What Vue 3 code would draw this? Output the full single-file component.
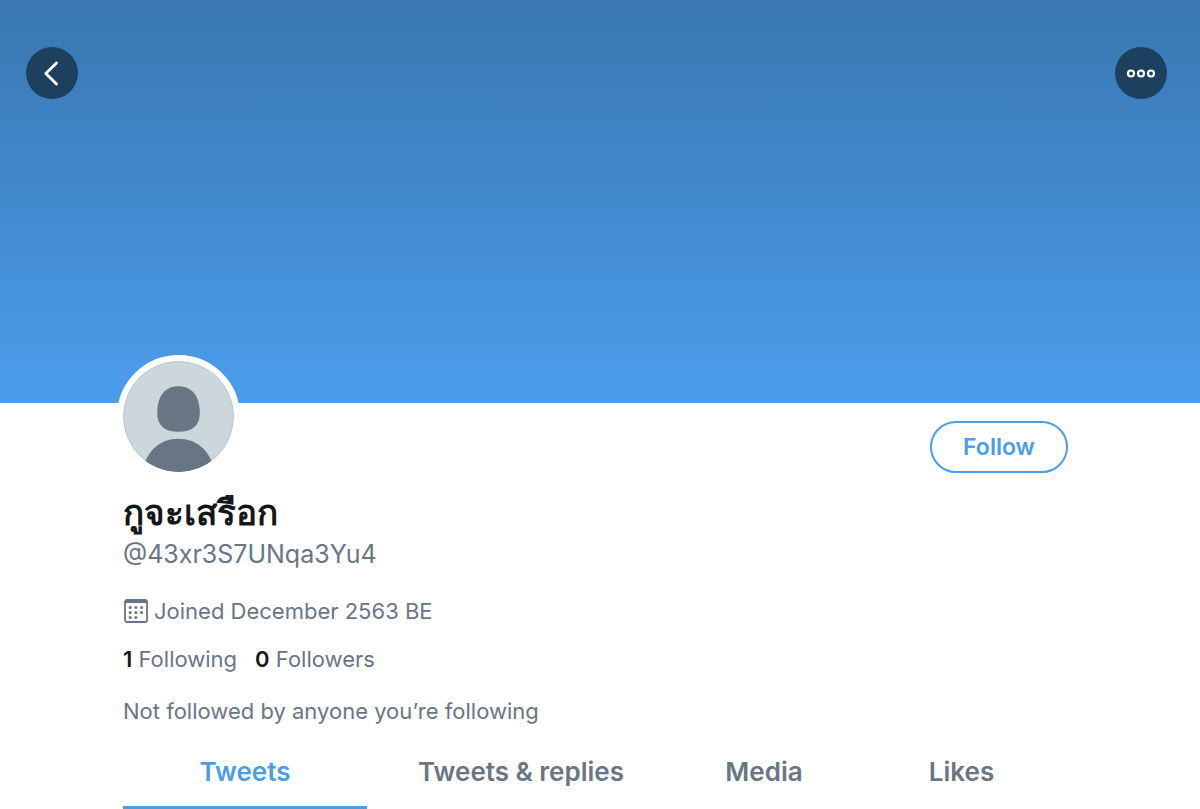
<script setup>
import { ref } from 'vue'

const tabs = ['Tweets', 'Tweets & replies', 'Media', 'Likes']
const active = ref('Tweets')
const dots = []
for (let row = 0; row < 3; row++) {
  for (let col = 0; col < 3; col++) {
    if (row === 2 && col === 2) continue
    dots.push({ x: 6.2 + col * 5.7, y: 8.5 + row * 5 })
  }
}
</script>

<template>
  <main class="profile">
    <header class="banner">
      <button class="round" type="button" aria-label="Back">
        <svg viewBox="0 0 52 52" fill="none" stroke="#fff" stroke-width="2.8" stroke-linecap="round" stroke-linejoin="round">
          <path d="M30.500 16 19.800 26.500 30.500 37" />
        </svg>
      </button>
      <button class="round" type="button" aria-label="More">
        <svg viewBox="0 0 52 52" fill="none" stroke="#fff" stroke-width="2.2">
          <circle cx="16" cy="26.500" r="3" />
          <circle cx="26" cy="26.500" r="3" />
          <circle cx="36" cy="26.500" r="3" />
        </svg>
      </button>
    </header>

    <section class="content">
      <div class="top">
        <svg class="avatar" viewBox="0 0 112 112" role="img" aria-label="Profile picture">
          <defs>
            <clipPath id="avatar-clip"><circle cx="56" cy="56" r="56" /></clipPath>
          </defs>
          <g clip-path="url(#avatar-clip)">
            <rect width="112" height="112" fill="#ccd6dd" />
            <circle cx="56" cy="56" r="55.500" fill="none" stroke="#bdc6cc" />
            <path d="M56 25.500C42 25.500 34.500 36 34.500 52.500C34.500 65 42 71.500 56 71.500C70 71.500 77.500 65 77.500 52.500C77.500 36 70 25.500 56 25.500Z" fill="#687684" />
            <path d="M20 110C24 90 38 78.500 56 78.500S88 90 92 110V112H20Z" fill="#687684" />
          </g>
        </svg>
        <button class="follow" type="button">Follow</button>
      </div>

      <h1 class="name">กูจะเสรือก</h1>
      <p class="handle">@43xr3S7UNqa3Yu4</p>

      <p class="joined">
        <svg viewBox="0 0 24 24" aria-hidden="true">
          <rect x="1" y="1" width="22" height="22" rx="2" fill="none" stroke="#687684" stroke-width="1.800" />
          <path d="M1 2.500Q1 1 2.500 1H21.500Q23 1 23 2.500V4H1Z" fill="#687684" />
          <circle v-for="dot in dots" :key="`${dot.x}-${dot.y}`" :cx="dot.x" :cy="dot.y" r="1.500" fill="#687684" />
        </svg>
        <span>Joined December 2563 BE</span>
      </p>

      <p class="counts">
        <a href="#following"><strong>1</strong> Following</a>
        <a href="#followers"><strong>0</strong> Followers</a>
      </p>

      <p class="note">Not followed by anyone you’re following</p>

      <nav class="tabs">
        <button
          v-for="tab in tabs"
          :key="tab"
          type="button"
          :class="{ active: tab === active }"
          @click="active = tab"
        >{{ tab }}</button>
      </nav>
    </section>
  </main>
</template>

<style>
body {
  background: #fff;
}
</style>

<style scoped>
.profile {
  overflow: hidden;
  font-family: Inter, "Noto Sans", "Liberation Sans", sans-serif;
  font-size: 22px;
  line-height: 28px;
  color: #687684;
}

.banner {
  display: flex;
  justify-content: space-between;
  align-items: flex-start;
  box-sizing: border-box;
  height: 403px;
  padding: 47px 33px 0 26px;
  background: linear-gradient(#3977b1, #4b9dec);
}

button {
  font: inherit;
  cursor: pointer;
}

.round {
  width: 52px;
  height: 52px;
  padding: 0;
  border: 0;
  border-radius: 50%;
  background: #1d405f;
}

.round svg {
  display: block;
  width: 100%;
}

.content {
  padding: 0 130px 0 123px;
}

.top {
  display: flex;
  justify-content: space-between;
  align-items: flex-end;
  margin-top: -48px;
}

.avatar {
  width: 111px;
  height: 111px;
  margin-left: -6px;
  border: 6px solid #fff;
  border-radius: 50%;
  background: #fff;
}

.follow {
  width: 138px;
  height: 52px;
  margin: 0 2px 5px 0;
  border: 2px solid #4b9de6;
  border-radius: 26px;
  background: #fff;
  color: #4b9de6;
  font-size: 23px;
  font-weight: 600;
}

.name {
  margin: 10px 0 0;
  font-size: 35px;
  line-height: 48px;
  font-weight: 700;
  color: #14171a;
}

p {
  margin: 0;
}

.handle {
  margin-top: 2px;
  font-size: 25px;
  line-height: 32px;
}

.joined {
  display: flex;
  align-items: center;
  gap: 6px;
  margin-top: 27px;
}

.joined svg {
  width: 24px;
  height: 24px;
  margin-left: 1px;
}

.counts {
  display: flex;
  gap: 18px;
  margin-top: 20px;
}

.counts a {
  color: inherit;
  text-decoration: none;
}

.counts strong {
  font-weight: 600;
  color: #14171a;
}

.note {
  margin-top: 24px;
}

.tabs {
  display: grid;
  grid-template-columns: 244fr 308fr 178fr 217fr;
  margin-top: 13px;
}

.tabs button {
  height: 72px;
  padding: 0;
  border: 0;
  border-bottom: 4px solid transparent;
  background: none;
  color: #687684;
  font-size: 26px;
  font-weight: 600;
}

.tabs .active {
  color: #4b9de6;
  border-color: #4b9de6;
}
</style>
